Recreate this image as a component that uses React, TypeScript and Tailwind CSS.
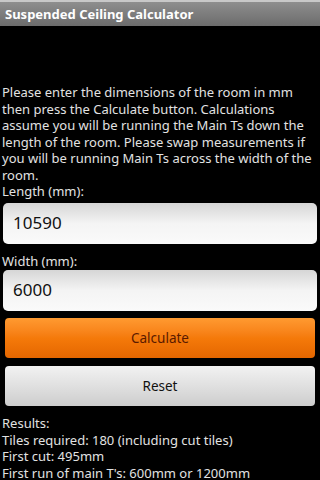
export default function App() {
  return (
    <div
      className="w-[320px] h-[480px] overflow-hidden bg-black text-[#e2e2e2]"
      style={{ fontFamily: '"Noto Sans", "Open Sans", sans-serif' }}
    >
      <div className="h-[26px] border-t-2 border-[#c8c8c8] bg-gradient-to-b from-[#8e8e8e] to-[#6c6c6c] px-[5px] flex items-center">
        <span className="text-[13px] font-bold text-white leading-none">Suspended Ceiling Calculator</span>
      </div>

      <div className="pt-[58px] px-[2px] text-[13px] leading-[16.5px]">
        <p className="whitespace-nowrap">
          Please enter the dimensions of the room in mm
          <br />
          then press the Calculate button. Calculations
          <br />
          assume you will be running the Main Ts down the
          <br />
          length of the room. Please swap measurements if
          <br />
          you will be running Main Ts across the width of the
          <br />
          room.
        </p>

        <p>Length (mm):</p>
        <div className="mx-[1px] mt-[3px] h-[41px] rounded-[5px] bg-gradient-to-b from-[#d6d6d6] via-[#f4f4f4] to-[#fafafa] flex items-center px-[10px] text-[17px] text-[#111]">
          10590
        </div>

        <p className="mt-[9px]">Width (mm):</p>
        <div className="mx-[1px] mt-[1px] h-[41px] rounded-[5px] bg-gradient-to-b from-[#d6d6d6] via-[#f4f4f4] to-[#fafafa] flex items-center px-[10px] text-[17px] text-[#111]">
          6000
        </div>

        <div className="mx-[3px] mt-[7px] h-[40px] rounded-[4px] bg-gradient-to-b from-[#ff9a30] via-[#f57a0a] to-[#e46600] flex items-center justify-center text-[13.5px] text-[#5a1a00]">
          Calculate
        </div>
        <div className="mx-[3px] mt-[8px] h-[40px] rounded-[4px] bg-gradient-to-b from-[#f2f2f2] via-[#e0e0e0] to-[#cdcdcd] flex items-center justify-center text-[13.5px] text-[#111]">
          Reset
        </div>

        <div className="mt-[9px]">
          <p>Results:</p>
          <p>Tiles required: 180 (including cut tiles)</p>
          <p>First cut: 495mm</p>
          <p>First run of main T's: 600mm or 1200mm</p>
        </div>
      </div>
    </div>
  );
}
